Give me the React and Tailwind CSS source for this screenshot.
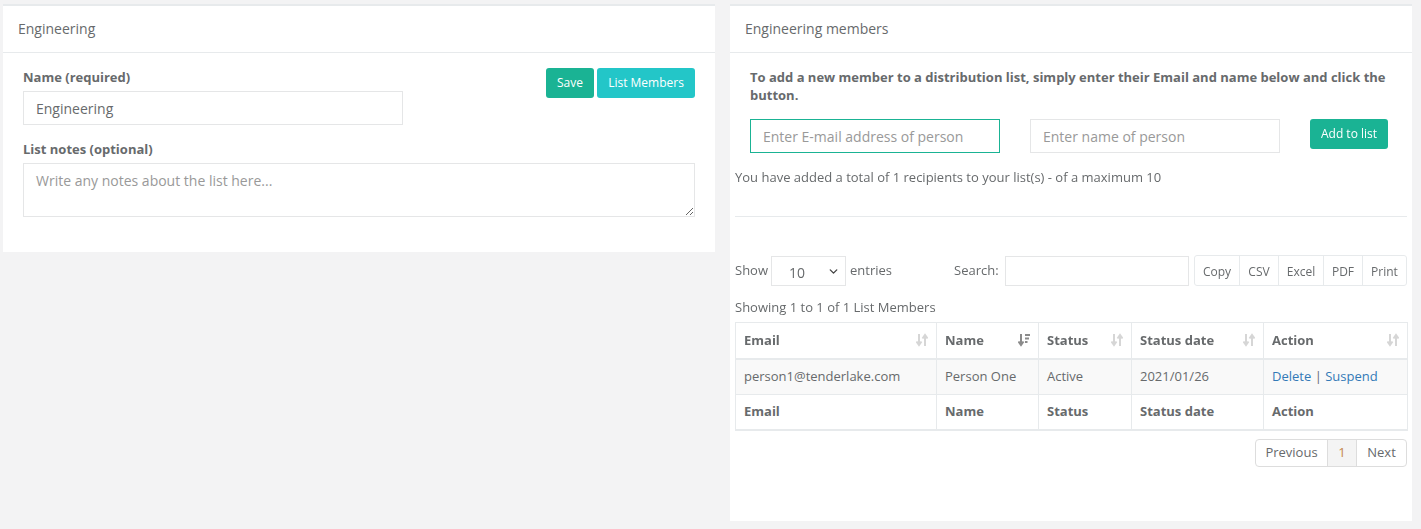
import { ChevronDown } from 'lucide-react';

function SortIcon({ active }) {
  const down = active ? '#8b8b8b' : '#d6d6d6';
  const up = active ? '#8b8b8b' : '#d6d6d6';
  return (
    <svg width="12" height="14" viewBox="0 0 12 14" className="shrink-0">
      <path d="M3 1v10M0.5 8.5L3 12l2.5-3.5" stroke={down} strokeWidth="2" fill="none" />
      {active ? (
        <g fill={up}>
          <rect x="7" y="1" width="5" height="2" />
          <rect x="7" y="4.5" width="4" height="2" />
          <rect x="7" y="8" width="2.5" height="2" />
        </g>
      ) : (
        <path d="M9 13V3M6.5 5.5L9 2l2.5 3.5" stroke={up} strokeWidth="2" fill="none" />
      )}
    </svg>
  );
}

const columns = [
  { label: 'Email', w: 'w-[201px]' },
  { label: 'Name', w: 'w-[102px]', active: true },
  { label: 'Status', w: 'w-[93px]' },
  { label: 'Status date', w: 'w-[132px]' },
  { label: 'Action', w: 'w-[144px]' },
];

const exportButtons = [
  { label: 'Copy', w: 'w-[44px]' },
  { label: 'CSV', w: 'w-[39px]' },
  { label: 'Excel', w: 'w-[45px]' },
  { label: 'PDF', w: 'w-[39px]' },
  { label: 'Print', w: 'w-[44px]' },
];

export default function App() {
  return (
    <div
      className="min-h-[529px] bg-[#f3f3f4] text-[13px] text-[#676a6c] flex gap-[15px] pl-[3px] pt-1 items-start"
      style={{ fontFamily: '"Open Sans", "Liberation Sans", sans-serif' }}
    >
      {/* Left: list settings */}
      <div className="w-[712px] shrink-0 bg-white border-t-2 border-[#e7eaec]">
        <div className="h-[47px] px-[15px] pb-[2px] flex items-center border-b border-[#e7eaec]">
          <h5 className="text-[14px]">Engineering</h5>
        </div>
        <div className="px-5 pt-[15px] pb-[35px]">
          <div className="flex justify-between">
            <div>
              <label className="block font-bold leading-[18px] mb-[5px]">Name (required)</label>
              <input
                defaultValue="Engineering"
                className="w-[380px] h-[34px] border border-[#e5e6e7] px-3 text-[14px] text-[#676a6c] outline-none"
              />
            </div>
            <div className="flex gap-[3px] h-[30px]">
              <button className="w-12 bg-[#1ab394] text-white text-[12px] rounded-[3px]">Save</button>
              <button className="w-[98px] bg-[#23c6c8] text-white text-[12px] rounded-[3px]">List Members</button>
            </div>
          </div>
          <label className="block font-bold leading-[18px] mt-[15px] mb-[5px]">List notes (optional)</label>
          <textarea
            placeholder="Write any notes about the list here..."
            className="block w-full h-[54px] border border-[#e5e6e7] px-3 py-[6px] text-[14px] placeholder:text-[#999] outline-none"
          />
        </div>
      </div>

      {/* Right: members */}
      <div className="w-[682px] shrink-0 h-[517px] bg-white border-t-2 border-[#e7eaec]">
        <div className="h-[47px] px-[15px] pb-[2px] flex items-center border-b border-[#e7eaec]">
          <h5 className="text-[14px]">Engineering members</h5>
        </div>
        <div className="pt-[15px] px-[5px]">
          <p className="px-[15px] font-bold leading-[18px]">
            To add a new member to a distribution list, simply enter their Email and name below and click the button.
          </p>
          <div className="flex gap-[30px] px-[15px] mt-[15px] items-start">
            <input
              autoFocus
              placeholder="Enter E-mail address of person"
              className="w-[250px] h-[34px] border border-[#1ab394] px-3 text-[14px] placeholder:text-[#999] outline-none"
            />
            <input
              placeholder="Enter name of person"
              className="w-[250px] h-[34px] border border-[#e5e6e7] px-3 text-[14px] placeholder:text-[#999] outline-none"
            />
            <button className="w-[78px] h-[30px] bg-[#1ab394] text-white text-[12px] rounded-[3px]">Add to list</button>
          </div>
          <p className="mt-[15px] leading-[18px]">You have added a total of 1 recipients to your list(s) - of a maximum 10</p>
          <div className="border-t border-[#e7eaec] mt-[30px]" />

          <div className="flex items-center mt-[38px] h-[31px]">
            <span className="w-[36px] shrink-0">Show</span>
            <div className="relative mr-1 shrink-0">
              <select className="appearance-none w-[75px] h-[30px] border border-[#e5e6e7] pl-[17px] pt-1 text-[14px] outline-none bg-white">
                <option>10</option>
                <option>25</option>
                <option>50</option>
              </select>
              <ChevronDown size={13} strokeWidth={2.5} className="absolute right-[6px] top-[9px] text-[#444] pointer-events-none" />
            </div>
            <span className="w-[104px] shrink-0">entries</span>
            <span className="w-[51px] shrink-0">Search:</span>
            <input className="w-[184px] shrink-0 h-[30px] border border-[#e5e6e7] outline-none" />
            <div className="ml-[5px] flex shrink-0 h-[31px] border border-[#e7eaec] rounded-[3px]">
              {exportButtons.map((b, i) => (
                <button
                  key={b.label}
                  className={`${b.w} pt-[2px] text-[12px] ${i > 0 ? 'border-l border-[#e7eaec]' : ''}`}
                >
                  {b.label}
                </button>
              ))}
            </div>
          </div>

          <p className="mt-3 leading-[18px]">Showing 1 to 1 of 1 List Members</p>

          <table className="mt-[6px] w-[672px] border-collapse border border-[#e7eaec] table-fixed">
            <thead>
              <tr className="h-[36px] border-b-2 border-[#e7eaec]">
                {columns.map((c) => (
                  <th key={c.label} className={`${c.w} border border-[#e7eaec] px-2 text-left font-bold`}>
                    <div className="flex items-center justify-between">
                      <span>{c.label}</span>
                      <SortIcon active={c.active} />
                    </div>
                  </th>
                ))}
              </tr>
            </thead>
            <tbody>
              <tr className="h-[36px] bg-[#f9f9f9]">
                <td className="border border-[#e7eaec] px-2">person1@tenderlake.com</td>
                <td className="border border-[#e7eaec] px-2">Person One</td>
                <td className="border border-[#e7eaec] px-2">Active</td>
                <td className="border border-[#e7eaec] px-2">2021/01/26</td>
                <td className="border border-[#e7eaec] px-2">
                  <a className="text-[#337ab7]">Delete</a> | <a className="text-[#337ab7]">Suspend</a>
                </td>
              </tr>
            </tbody>
            <tfoot>
              <tr className="h-[35px] border-b-2 border-[#e7eaec]">
                {columns.map((c) => (
                  <th key={c.label} className="border border-[#e7eaec] px-2 text-left font-bold">
                    {c.label}
                  </th>
                ))}
              </tr>
            </tfoot>
          </table>

          <div className="flex justify-end mt-[8px]">
            <div className="flex h-[28px] border border-[#dddddd] rounded-[4px] overflow-hidden">
              <span className="w-[71px] flex items-center justify-center">Previous</span>
              <span className="w-[29px] flex items-center justify-center bg-[#f4f4f4] border-l border-[#dddddd] text-[#c5884d]">1</span>
              <span className="w-[50px] flex items-center justify-center border-l border-[#dddddd]">Next</span>
            </div>
          </div>
        </div>
      </div>
    </div>
  );
}
